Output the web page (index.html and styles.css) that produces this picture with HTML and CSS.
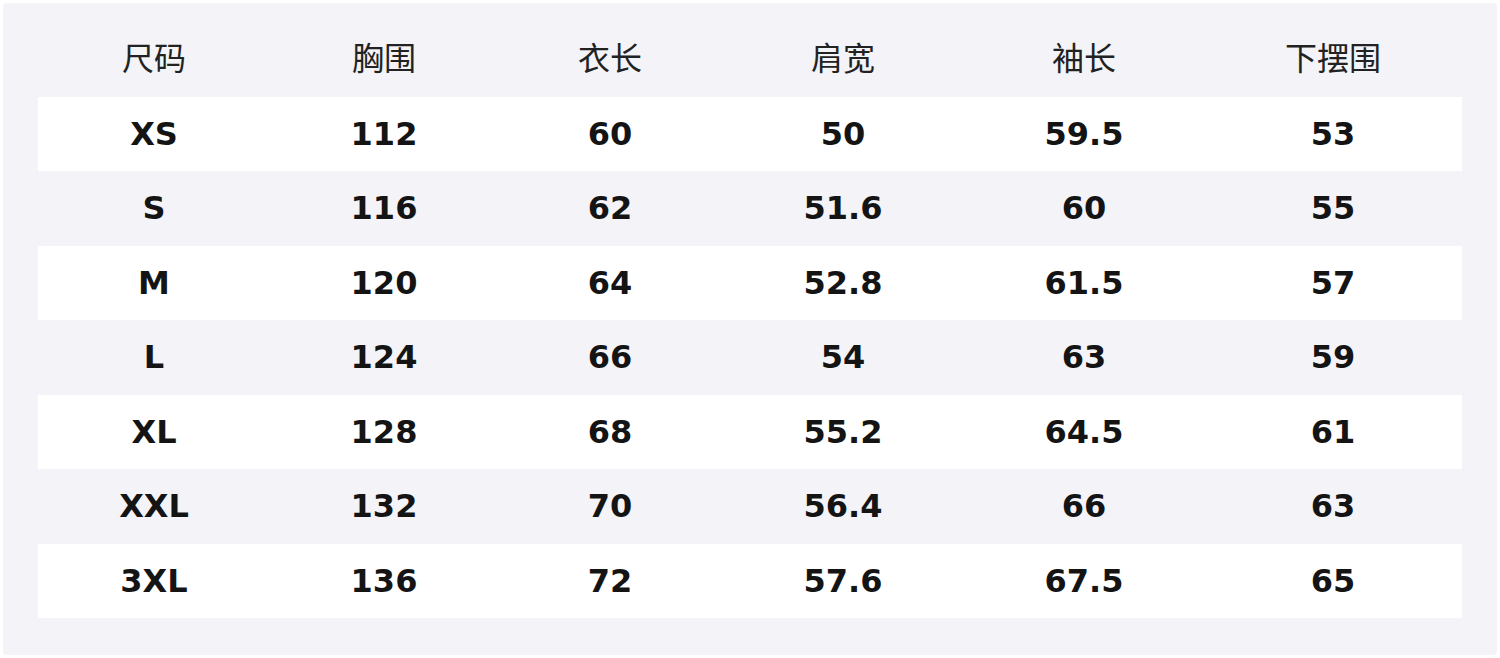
FILE: index.html
```html
<!DOCTYPE html>
<html lang="zh">
<head>
<meta charset="utf-8">
<link rel="stylesheet" href="styles.css">
</head>
<body>
<div class="panel">
  <div class="table">
    <div class="row head">
      <div class="cell">尺码</div><div class="cell">胸围</div><div class="cell">衣长</div><div class="cell">肩宽</div><div class="cell">袖长</div><div class="cell">下摆围</div>
    </div>
    <div class="row odd">
      <div class="cell">XS</div><div class="cell">112</div><div class="cell">60</div><div class="cell">50</div><div class="cell">59.5</div><div class="cell">53</div>
    </div>
    <div class="row">
      <div class="cell">S</div><div class="cell">116</div><div class="cell">62</div><div class="cell">51.6</div><div class="cell">60</div><div class="cell">55</div>
    </div>
    <div class="row odd">
      <div class="cell">M</div><div class="cell">120</div><div class="cell">64</div><div class="cell">52.8</div><div class="cell">61.5</div><div class="cell">57</div>
    </div>
    <div class="row">
      <div class="cell">L</div><div class="cell">124</div><div class="cell">66</div><div class="cell">54</div><div class="cell">63</div><div class="cell">59</div>
    </div>
    <div class="row odd">
      <div class="cell">XL</div><div class="cell">128</div><div class="cell">68</div><div class="cell">55.2</div><div class="cell">64.5</div><div class="cell">61</div>
    </div>
    <div class="row">
      <div class="cell">XXL</div><div class="cell">132</div><div class="cell">70</div><div class="cell">56.4</div><div class="cell">66</div><div class="cell">63</div>
    </div>
    <div class="row odd">
      <div class="cell">3XL</div><div class="cell">136</div><div class="cell">72</div><div class="cell">57.6</div><div class="cell">67.5</div><div class="cell">65</div>
    </div>
  </div>
</div>
</body>
</html>
```
FILE: styles.css
```css
html, body {
  margin: 0;
  padding: 0;
  background: #ffffff;
}
body {
  padding: 3px;
  font-family: "DejaVu Sans", "Noto Sans CJK SC", sans-serif;
  color: #141414;
}
.panel {
  height: 652px;
  box-sizing: border-box;
  background: #f3f3f8;
  border-radius: 4px;
  padding: 19px 35px 0 35px;
}
.table {
  display: flex;
  flex-direction: column;
}
.row {
  display: grid;
  grid-template-columns: 232px 228px 224px 242px 240px 258px;
  height: 74.5px;
  align-items: center;
}
.row.odd {
  background: #ffffff;
}
.cell {
  text-align: center;
  font-size: 32px;
  font-weight: 700;
  line-height: 1;
}
.head .cell {
  font-family: "Noto Sans CJK SC", sans-serif;
  font-weight: 400;
  font-size: 32px;
  color: #222222;
  padding-bottom: 6px;
}
```
